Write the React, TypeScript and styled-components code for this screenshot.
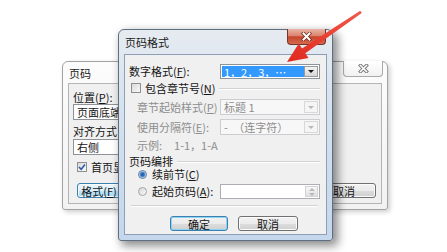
import styled, { createGlobalStyle } from "styled-components";

const GlobalStyle = createGlobalStyle`
  html, body {
    margin: 0;
    padding: 0;
    background: #ffffff;
  }
  body {
    font-family: "Noto Sans CJK SC", "Liberation Sans", sans-serif;
    font-size: 11px;
    color: #141414;
  }
`;

const Desktop = styled.div`
  position: relative;
  width: 447px;
  height: 252px;
  overflow: hidden;
  background: #ffffff;
`;

const Window = styled.div<{ $x: number; $y: number; $w: number; $h: number; $active?: boolean }>`
  position: absolute;
  left: ${(p) => p.$x}px;
  top: ${(p) => p.$y}px;
  width: ${(p) => p.$w}px;
  height: ${(p) => p.$h}px;
  box-sizing: border-box;
  display: flex;
  flex-direction: column;
  border: 1px solid ${(p) => (p.$active ? "#5f6f82" : "#a3a3a3")};
  border-radius: 6px 6px 3px 3px;
  background: ${(p) =>
    p.$active
      ? "linear-gradient(180deg, #e6ebf0 0%, #d5e1ee 40%, #c4d7ec 100%)"
      : "linear-gradient(180deg, #fcfcfc 0%, #f2f2f2 100%)"};
  box-shadow: ${(p) =>
    p.$active ? "4px 4px 10px 1px rgba(0, 0, 0, 0.45)" : "2px 2px 5px rgba(0, 0, 0, 0.2)"};
`;

const TitleBar = styled.div<{ $h: number; $pr: number }>`
  flex: none;
  height: ${(p) => p.$h}px;
  display: flex;
  align-items: center;
  padding: 0 ${(p) => p.$pr}px 0 6px;
`;

const Title = styled.span`
  font-size: 11px;
  color: #1a1a1a;
`;

const CloseButton = styled.div<{ $active?: boolean }>`
  align-self: flex-start;
  margin-left: auto;
  margin-top: -1px;
  width: ${(p) => (p.$active ? 39 : 40)}px;
  height: 16px;
  box-sizing: border-box;
  display: flex;
  align-items: center;
  justify-content: center;
  border: 1px solid ${(p) => (p.$active ? "#74352b" : "#a9a9a9")};
  border-top: none;
  border-radius: 0 0 4px 4px;
  background: ${(p) =>
    p.$active
      ? "linear-gradient(180deg, #eab3a5 0%, #dc836e 45%, #c4452c 52%, #d5694d 100%)"
      : "linear-gradient(180deg, #ffffff 0%, #f1f1f1 100%)"};
`;

const Panel = styled.div`
  flex: 1;
  min-height: 0;
  margin: 0 5px 5px;
  display: flex;
  flex-direction: column;
  border: 1px solid #8d9fb6;
  background: #f0f0f0;
  padding: 9px 6px 0 4px;
`;

/* the inactive dialog: fields on the left, the action buttons on the right */
const BackPanel = styled.div`
  flex: 1;
  min-height: 0;
  margin: 0 5px 5px;
  display: flex;
  border: 1px solid #b4b4b4;
  background: #f0f0f0;
`;

const FieldColumn = styled.div`
  width: 56px;
  flex: none;
  overflow: hidden;
  display: flex;
  flex-direction: column;
  padding: 6px 0 5px 4px;
  box-sizing: border-box;
`;

const ActionColumn = styled.div`
  flex: 1;
  display: flex;
  align-items: flex-end;
  justify-content: flex-end;
  gap: 6px;
  padding: 0 5px 5px 0;
`;

const Row = styled.div<{ $h: number; $mt?: number; $indent?: number }>`
  flex: none;
  display: flex;
  align-items: center;
  height: ${(p) => p.$h}px;
  margin-top: ${(p) => p.$mt ?? 0}px;
  padding-left: ${(p) => p.$indent ?? 0}px;
  white-space: nowrap;
`;

const Label = styled.span<{ $w?: number; $indent?: number; $disabled?: boolean }>`
  flex: none;
  box-sizing: border-box;
  display: flex;
  align-items: center;
  width: ${(p) => (p.$w ? `${p.$w}px` : "auto")};
  padding-left: ${(p) => p.$indent ?? 0}px;
  color: ${(p) => (p.$disabled ? "#8d8d8d" : "#141414")};
  line-height: 1;
`;

const Key = styled.span`
  text-decoration: underline;
`;

const Sample = styled.span`
  margin-left: 12px;
  color: #8d8d8d;
`;

const Select = styled.div<{ $w: number; $disabled?: boolean }>`
  flex: none;
  width: ${(p) => p.$w}px;
  height: 100%;
  box-sizing: border-box;
  display: flex;
  padding: 1px;
  border: 1px solid ${(p) => (p.$disabled ? "#cbcdd1" : "#8e9299")};
  background: ${(p) => (p.$disabled ? "#f7f7f7" : "#ffffff")};
`;

const SelectText = styled.span<{ $selected?: boolean; $disabled?: boolean }>`
  flex: 1;
  display: flex;
  align-items: center;
  padding-left: 2px;
  background: ${(p) => (p.$selected ? "#3399ff" : "transparent")};
  color: ${(p) => (p.$selected ? "#ffffff" : p.$disabled ? "#8d8d8d" : "#141414")};
`;

const DropButton = styled.span<{ $disabled?: boolean }>`
  flex: none;
  width: 12px;
  display: flex;
  align-items: center;
  justify-content: center;
  border: 1px solid ${(p) => (p.$disabled ? "#d8d8d8" : "#9a9a9a")};
  background: ${(p) =>
    p.$disabled ? "#f5f5f5" : "linear-gradient(180deg, #f4f4f4 0%, #d5d5d5 100%)"};
`;

const Caret = styled.span<{ $disabled?: boolean; $up?: boolean }>`
  width: 0;
  height: 0;
  border-left: 3px solid transparent;
  border-right: 3px solid transparent;
  border-top: ${(p) => (p.$up ? "none" : `3px solid ${p.$disabled ? "#b8b8b8" : "#111111"}`)};
  border-bottom: ${(p) => (p.$up ? `3px solid ${p.$disabled ? "#b8b8b8" : "#111111"}` : "none")};
`;

const CheckBox = styled.span`
  flex: none;
  width: 10px;
  height: 10px;
  box-sizing: border-box;
  display: flex;
  align-items: center;
  justify-content: center;
  margin: 0 4px 0 2px;
  border: 1px solid #8f8f8f;
  background: linear-gradient(135deg, #d9d9d9 0%, #f9f9f9 100%);
`;

const Radio = styled.span<{ $checked?: boolean }>`
  flex: none;
  width: 9px;
  height: 9px;
  box-sizing: border-box;
  border-radius: 50%;
  margin-right: 5px;
  border: 1px solid ${(p) => (p.$checked ? "#5f7c9c" : "#a3a3a3")};
  background: ${(p) =>
    p.$checked
      ? "radial-gradient(circle at 50% 50%, #245fa8 0, #2d6cb6 1.6px, #79ace0 2.8px, #eef3f8 3.6px)"
      : "linear-gradient(135deg, #d6d6d6 0%, #fbfbfb 100%)"};
`;

const Rule = styled.span`
  flex: 1;
  height: 0;
  margin: 1px 0 0 4px;
  border-top: 1px solid #d2d2d2;
  border-bottom: 1px solid #ffffff;
`;

const Divider = styled.div<{ $mt: number }>`
  height: 0;
  margin: ${(p) => p.$mt}px 2px 0 2px;
  border-top: 1px solid #d2d2d2;
  border-bottom: 1px solid #ffffff;
`;

const SpinBox = styled.div`
  flex: none;
  width: 100px;
  height: 100%;
  box-sizing: border-box;
  display: flex;
  justify-content: flex-end;
  padding: 1px;
  border: 1px solid #abadb3;
  background: #ffffff;
`;

const Spinner = styled.span`
  width: 11px;
  display: flex;
  flex-direction: column;
  align-items: center;
  justify-content: center;
  gap: 2px;
  border: 1px solid #d3d3d3;
  background: linear-gradient(180deg, #f7f7f7 0%, #e1e1e1 100%);
`;

const ButtonRow = styled.div<{ $mt: number; $pr: number }>`
  display: flex;
  justify-content: flex-end;
  gap: 10px;
  margin-top: ${(p) => p.$mt}px;
  padding-right: ${(p) => p.$pr}px;
`;

const Button = styled.div<{ $w: number; $variant?: "default" | "hot" }>`
  flex: none;
  width: ${(p) => p.$w}px;
  height: 15px;
  box-sizing: border-box;
  display: flex;
  align-items: center;
  justify-content: center;
  white-space: nowrap;
  border: 1px solid ${(p) => (p.$variant ? "#3c7fb1" : "#707070")};
  border-radius: 3px;
  background: ${(p) =>
    p.$variant === "hot"
      ? "linear-gradient(180deg, #eaf6fd 0%, #d9f0fc 50%, #bee6fd 51%, #a7d9f5 100%)"
      : "linear-gradient(180deg, #f2f2f2 0%, #ebebeb 50%, #dddddd 51%, #cfcfcf 100%)"};
  box-shadow: ${(p) =>
    p.$variant === "default" ? "inset 0 0 0 1px #8fd3f4" : "inset 0 0 0 1px #fbfbfb"};
  color: #141414;
`;

const FormatButton = styled(Button)`
  margin: auto 0 0 4px;
`;

const ArrowLayer = styled.svg`
  position: absolute;
  left: 0;
  top: 0;
  width: 447px;
  height: 252px;
  pointer-events: none;
`;

const CloseGlyph = ({ active }: { active?: boolean }) => (
  <svg width="11" height="9" viewBox="0 0 11 9">
    <path d="M2.5 1.5 L8.5 7.5 M8.5 1.5 L2.5 7.5" stroke={active ? "#6a2418" : "#7a7a7a"} strokeWidth="3.4" strokeLinecap="square" />
    <path d="M2.5 1.5 L8.5 7.5 M8.5 1.5 L2.5 7.5" stroke="#ffffff" strokeWidth={active ? 2 : 1.5} strokeLinecap="square" />
  </svg>
);

const Tick = () => (
  <svg width="8" height="8" viewBox="0 0 8 8">
    <path d="M1 4 L3.2 6.3 L7 1.5" stroke="#2b58a6" strokeWidth="1.5" fill="none" />
  </svg>
);

export default function App() {
  return (
    <Desktop>
      <GlobalStyle />

      <Window $x={62} $y={61} $w={326} $h={149}>
        <TitleBar $h={21} $pr={4}>
          <Title>页码</Title>
          <CloseButton>
            <CloseGlyph />
          </CloseButton>
        </TitleBar>
        <BackPanel>
          <FieldColumn>
            <Row $h={14}>
              <Label>位置(<Key>P</Key>):</Label>
            </Row>
            <Row $h={16}>
              <Select $w={150}>
                <SelectText>页面底端</SelectText>
              </Select>
            </Row>
            <Row $h={14} $mt={4}>
              <Label>对齐方式</Label>
            </Row>
            <Row $h={16} $mt={1}>
              <Select $w={150}>
                <SelectText>右侧</SelectText>
              </Select>
            </Row>
            <Row $h={12} $mt={6} $indent={2}>
              <CheckBox>
                <Tick />
              </CheckBox>
              <Label>首页显</Label>
            </Row>
            <FormatButton $w={44} $variant="hot">
              格式(<Key>F</Key>)
            </FormatButton>
          </FieldColumn>
          <ActionColumn>
            <Button $w={64}>取消</Button>
          </ActionColumn>
        </BackPanel>
      </Window>

      <Window $x={118} $y={29} $w={215} $h={212} $active>
        <TitleBar $h={24} $pr={6}>
          <Title>页码格式</Title>
          <CloseButton $active>
            <CloseGlyph active />
          </CloseButton>
        </TitleBar>
        <Panel>
          <Row $h={15}>
            <Label $w={91}>数字格式(<Key>F</Key>):</Label>
            <Select $w={100}>
              <SelectText $selected>1，2，3，…</SelectText>
              <DropButton>
                <Caret />
              </DropButton>
            </Select>
          </Row>
          <Row $h={14} $mt={2}>
            <CheckBox />
            <Label>包含章节号(<Key>N</Key>)</Label>
            <Rule />
          </Row>
          <Row $h={16} $mt={4}>
            <Label $w={91} $indent={8} $disabled>
              章节起始样式(<Key>P</Key>)
            </Label>
            <Select $w={100} $disabled>
              <SelectText $disabled>标题 1</SelectText>
              <DropButton $disabled>
                <Caret $disabled />
              </DropButton>
            </Select>
          </Row>
          <Row $h={16} $mt={4}>
            <Label $w={91} $indent={8} $disabled>
              使用分隔符(<Key>E</Key>):
            </Label>
            <Select $w={100} $disabled>
              <SelectText $disabled>-　（连字符）</SelectText>
              <DropButton $disabled>
                <Caret $disabled />
              </DropButton>
            </Select>
          </Row>
          <Row $h={14} $mt={3}>
            <Label $indent={8} $disabled>
              示例:
            </Label>
            <Sample>1-1，1-A</Sample>
          </Row>
          <Row $h={14} $mt={2}>
            <Label>页码编排</Label>
            <Rule />
          </Row>
          <Row $h={13} $indent={9}>
            <Radio $checked />
            <Label>续前节(<Key>C</Key>)</Label>
          </Row>
          <Row $h={15} $mt={3}>
            <Label $w={91} $indent={9}>
              <Radio />
              起始页码(<Key>A</Key>):
            </Label>
            <SpinBox>
              <Spinner>
                <Caret $up $disabled />
                <Caret $disabled />
              </Spinner>
            </SpinBox>
          </Row>
          <Divider $mt={6} />
          <ButtonRow $mt={9} $pr={22}>
            <Button $w={58} $variant="default">
              确定
            </Button>
            <Button $w={60}>取消</Button>
          </ButtonRow>
        </Panel>
      </Window>

      <ArrowLayer viewBox="0 0 447 252">
        <defs>
          <linearGradient id="arrowFill" x1="1" y1="0" x2="0" y2="1">
            <stop offset="0" stopColor="#f05a4a" />
            <stop offset="1" stopColor="#e0281e" />
          </linearGradient>
        </defs>
        <polygon
          points="287,62 308.5,58 305.3,53.2 361.8,13 360.2,10.8 302.0,48.5 298.8,43.6"
          fill="url(#arrowFill)"
        />
      </ArrowLayer>
    </Desktop>
  );
}
